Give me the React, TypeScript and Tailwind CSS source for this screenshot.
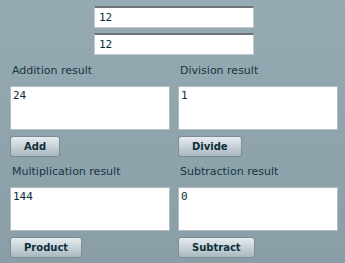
import { useState } from "react"

const labelCls = "block pl-[2px] text-[11px] leading-[14px] text-[#163741] [font-family:'DejaVu_Sans',Verdana,sans-serif]"
const boxCls =
  "mt-2 h-[44px] w-[160px] resize-none border border-[#b5bcbf] bg-white px-[2px] py-[2px] text-[11px] leading-[14px] text-[#0c2d37] outline-none [font-family:'DejaVu_Sans_Mono',monospace]"
const btnCls =
  "mt-[6px] h-[21px] self-start rounded-[3px] border border-[#7d8b92] bg-gradient-to-b from-[#e6ecef] to-[#a9b8bf] px-[13px] text-[10px] font-bold text-[#0d2f3a] [font-family:'DejaVu_Sans',Verdana,sans-serif]"

const Cell = ({ label, value, button }: { label: string; value: string; button: string }) => (
  <div className="flex flex-col">
    <span className={labelCls}>{label}</span>
    <textarea className={boxCls} value={value} readOnly />
    <button className={btnCls}>{button}</button>
  </div>
)

export default function App() {
  const [a, setA] = useState("12")
  const [b, setB] = useState("12")
  const x = Number(a)
  const y = Number(b)

  const inputCls =
    "h-[22px] w-[160px] border border-[#c4c9cb] border-t-2 border-t-[#6f7375] bg-white px-[4px] text-[11px] text-[#0c2d37] outline-none [font-family:'DejaVu_Sans_Mono',monospace]"

  return (
    <div className="min-h-[263px] w-[345px] bg-gradient-to-b from-[#95aab3] to-[#899ea6] pt-[6px]">
      <div className="flex flex-col gap-[5px] pl-[94px]">
        <input className={inputCls} value={a} onChange={(e) => setA(e.target.value)} />
        <input className={inputCls} value={b} onChange={(e) => setB(e.target.value)} />
      </div>
      <div className="mt-[9px] grid grid-cols-[160px_160px] gap-x-2 gap-y-2 pl-[10px]">
        <Cell label="Addition result" value={String(x + y)} button="Add" />
        <Cell label="Division result" value={String(x / y)} button="Divide" />
        <Cell label="Multiplication result" value={String(x * y)} button="Product" />
        <Cell label="Subtraction result" value={String(x - y)} button="Subtract" />
      </div>
    </div>
  )
}
